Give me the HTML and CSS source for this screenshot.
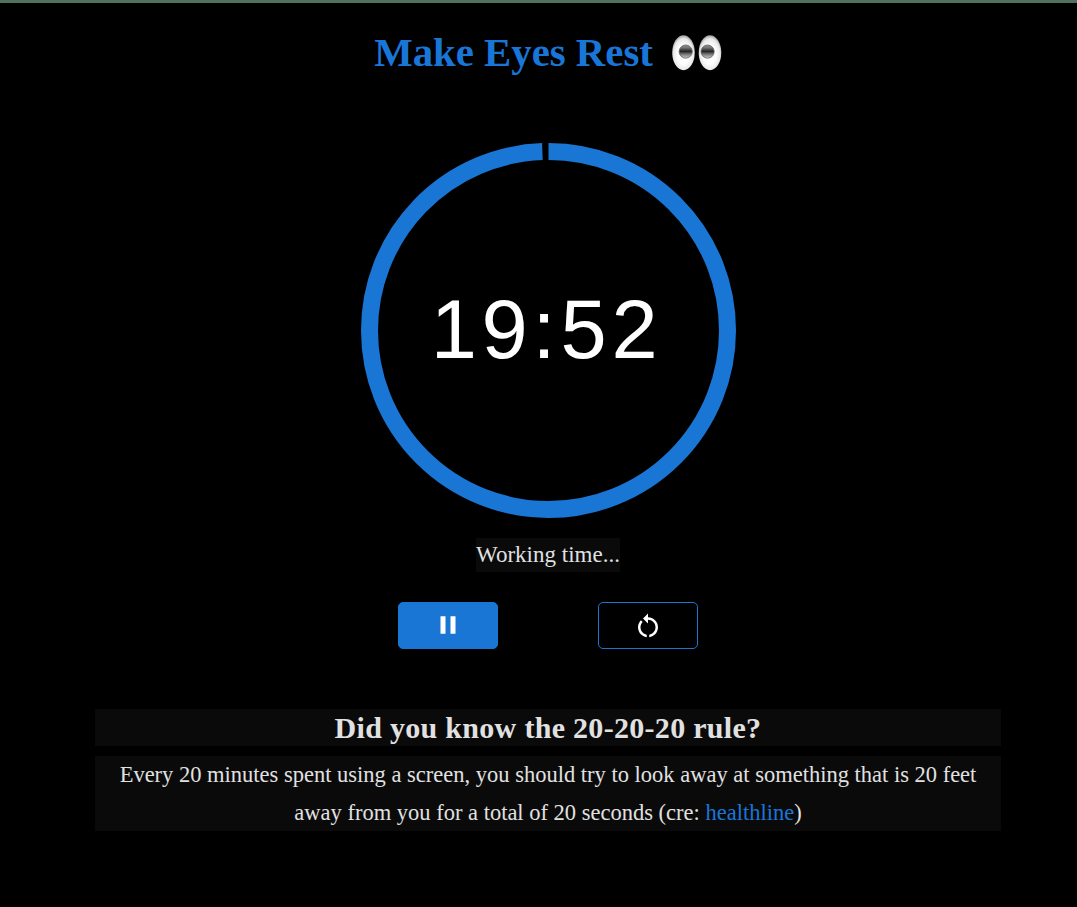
FILE: index.html
```
<!DOCTYPE html>
<html lang="en">
<head>
<meta charset="utf-8">
<title>Make Eyes Rest</title>
<link rel="stylesheet" href="styles.css">
</head>
<body>
<main class="app">
  <h1 class="title"><span>Make Eyes Rest</span>
    <svg class="eyes" viewBox="0 0 50 36">
      <defs>
        <radialGradient id="white" cx=".5" cy=".55" r=".55"><stop offset=".5" stop-color="#fdfdfd"/><stop offset=".82" stop-color="#e8e8e8"/><stop offset="1" stop-color="#999"/></radialGradient>
        <linearGradient id="pupil" x2="0" y2="1"><stop offset="0" stop-color="#888"/><stop offset=".2" stop-color="#777"/><stop offset=".48" stop-color="#222"/><stop offset=".7" stop-color="#777"/><stop offset="1" stop-color="#ccc"/></linearGradient>
      </defs>
      <ellipse cx="11.5" cy="17.7" rx="11.3" ry="17.5" fill="url(#white)"/>
      <ellipse cx="38" cy="17.7" rx="11.3" ry="17.5" fill="url(#white)"/>
      <circle cx="13.7" cy="16.6" r="6.6" fill="url(#pupil)" stroke="#666" stroke-width=".8"/>
      <circle cx="35.6" cy="16.6" r="6.6" fill="url(#pupil)" stroke="#666" stroke-width=".8"/>
    </svg>
  </h1>
  <section class="timer">
    <svg class="ring" viewBox="0 0 375 375"><circle class="progress" cx="187.5" cy="187.5" r="179" pathLength="1200" stroke-dasharray="1193.4 6.6" transform="rotate(-90 187.5 187.5)"/></svg>
    <span class="time">19:52</span>
  </section>
  <p class="status">Working time...</p>
  <div class="controls">
    <button class="button primary" aria-label="Pause"><svg class="icon" viewBox="0 0 24 24"><path d="M6 19h4V5H6v14zm8-14v14h4V5h-4z"/></svg></button>
    <button class="button" aria-label="Restart"><svg class="icon" viewBox="0 0 24 24"><path d="M12 5V2L8 6l4 4V7c3.31 0 6 2.69 6 6 0 2.97-2.17 5.43-5 5.91v2.02c3.95-.49 7-3.85 7-7.93 0-4.42-3.58-8-8-8zm-6 8c0-1.65.67-3.15 1.76-4.24L6.34 7.34C4.9 8.79 4 10.79 4 13c0 4.08 3.05 7.44 7 7.93v-2.02c-2.83-.48-5-2.94-5-5.91z"/></svg></button>
  </div>
  <section class="rule">
    <h2 class="heading">Did you know the 20-20-20 rule?</h2>
    <p class="copy">Every 20 minutes spent using a screen, you should try to look away at something that is 20 feet away from you for a total of 20 seconds (cre: <a class="link" href="#">healthline</a>)</p>
  </section>
</main>
</body>
</html>
```
FILE: styles.css
```
* { box-sizing: border-box; }
body { margin: 0; height: 907px; overflow: hidden; background: #000; color: #e1e1e1; font-family: "Liberation Serif", serif; }
.app { height: 907px; border-top: 3px solid #527060; padding: 27px 76px 0 95px; display: flex; flex-direction: column; align-items: center; }
.title { margin: 0; padding-bottom: 1px; height: 46px; display: flex; align-items: center; gap: 19px; color: #1976d9; font-size: 40.8px; line-height: 44px; white-space: nowrap; }
.eyes { width: 50px; height: 36px; }
.timer { margin-top: 67px; width: 375px; height: 375px; display: grid; place-items: center; }
.ring, .time { grid-area: 1 / 1; }
.ring { width: 375px; height: 375px; }
.progress { fill: none; stroke: #1976d5; stroke-width: 17; }
.time { padding: 0 3px 2px 0; color: #fff; font: 83px/94px "Liberation Sans", sans-serif; letter-spacing: 4.8px; }
.status { margin: 20px 0 0; height: 34px; line-height: 34px; font-size: 23px; background: #0a0a0a; }
.controls { display: flex; gap: 100px; margin-top: 30px; }
.button { display: flex; align-items: center; justify-content: center; width: 100px; height: 47px; padding: 0; border: 1px solid #1976d5; border-radius: 5px; background: #000; }
.primary { padding-bottom: 1px; background: #1976d5; }
.icon { width: 30px; height: 30px; fill: #fff; }
.rule { width: 906px; margin-top: 60px; text-align: center; }
.heading { margin: 0 0 10px; height: 37px; line-height: 38px; font-size: 30px; letter-spacing: .3px; background: #0a0a0a; }
.copy { margin: 0; padding: 0 20px; font-size: 22.5px; line-height: 37.5px; background: #0a0a0a; }
.link { color: #1976d9; text-decoration: none; }
```
